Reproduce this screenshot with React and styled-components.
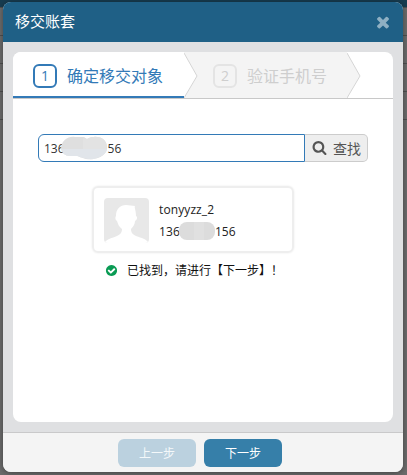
import { styled, createGlobalStyle } from "styled-components"

const GlobalStyle = createGlobalStyle`
    * {
        box-sizing: border-box;
    }

    body {
        margin: 0;
        overflow: hidden;
        font-family: "Open Sans", "Noto Sans CJK SC", sans-serif;
        font-size: 12px;
        color: #222;
    }
`

const Page = styled.div`
    height: 475px;
    padding: 2px 4px 3px 3px;
    background:
        linear-gradient(#173c50 0 7px, transparent 7px),
        repeating-linear-gradient(transparent 0 7px, #505050 7px 8px, transparent 8px 28px) 0 0 / 100% 120px no-repeat,
        #6c6c6c;
`

const Modal = styled.div`
    display: flex;
    flex-direction: column;
    height: 470px;
    border-radius: 8px;
    overflow: hidden;
    background: #dfe0e2;
    box-shadow: 0 1px 6px rgba(0, 0, 0, 0.4);
`

const Header = styled.div`
    display: flex;
    align-items: center;
    justify-content: space-between;
    height: 40px;
    padding: 0 11px 0 12px;
    background: #1f6086;
`

const Title = styled.div`
    padding-bottom: 2px;
    font-size: 15px;
    line-height: 20px;
    color: #fff;
`

const Icon = styled.svg`
    flex: none;
    width: ${props => props.$size}px;
    height: ${props => props.$size}px;
    fill: ${props => props.$color};
`

const Body = styled.div`
    flex: 1;
    padding: 10px;
`

const Panel = styled.div`
    height: 370px;
    border-radius: 8px;
    overflow: hidden;
    background: #fff;
`

const Steps = styled.div`
    display: flex;
    height: 47px;
    border-bottom: 1px solid #c8c8c8;
`

const Step = styled.div`
    display: flex;
    align-items: center;
    width: ${props => props.$width}px;
    height: 46px;
    padding: ${props => (props.$active ? 4 : 2)}px 0 0 ${props => props.$indent}px;
    font-size: 16px;
    color: ${props => (props.$active ? "#337ab7" : "#cecece")};
    background: ${props => (props.$active ? "#fff" : "#f4f4f4")};
    border-bottom: ${props => (props.$active ? "2px solid #337ab7" : "none")};
`

const StepLabel = styled.span`
    padding-bottom: 2px;
`

const StepNumber = styled.span`
    display: flex;
    align-items: center;
    justify-content: center;
    width: 24px;
    height: 24px;
    margin-right: 10px;
    border: 2px solid ${props => (props.$active ? "#337ab7" : "#e4e4e4")};
    border-radius: 6px;
    font-size: 14px;
    line-height: 20px;
`

const Arrow = styled.svg`
    flex: none;
    width: 14px;
    height: 46px;
    background: ${props => props.$after};
`

const Content = styled.div`
    padding: 35px 25px 0;
`

const Search = styled.div`
    display: flex;
    height: 28px;
`

const Field = styled.div`
    display: flex;
    align-items: center;
    width: 267px;
    padding-left: 5px;
    border: 1px solid #337ab7;
    border-radius: 6px 0 0 6px;
    color: #333;
`

const SearchButton = styled.button`
    display: flex;
    align-items: center;
    gap: 6px;
    width: 63px;
    padding: 0 0 1px 7px;
    border: 1px solid #ccc;
    border-left: none;
    border-radius: 0 5px 5px 0;
    background: #eee;
    font-family: inherit;
    font-size: 14px;
    color: #555;
`

const Smudge = styled.svg`
    position: relative;
    flex: none;
    width: ${props => props.$width}px;
    height: ${props => props.$height}px;
    margin-left: -${props => props.$overlap}px;
`

const Card = styled.div`
    display: flex;
    width: 202px;
    height: 67px;
    margin: 24px 0 0 54px;
    padding: 10px;
    border: 2px solid #eee;
    border-radius: 6px;
    box-shadow: 0 0 2px #e8e8e8;
`

const Avatar = styled.svg`
    width: 45px;
    height: 45px;
    border-radius: 4px;
    background: #e8e8e8;
`

const Info = styled.div`
    padding-left: 10px;
    letter-spacing: 0.1px;
`

const Line = styled.div`
    display: flex;
    align-items: center;
    height: 22px;
    color: #222;
`

const Status = styled.div`
    display: flex;
    align-items: center;
    gap: 9px;
    height: 18px;
    margin: 8px 0 0 67px;
    color: #111;
    white-space: nowrap;
`

const Footer = styled.div`
    display: flex;
    justify-content: center;
    gap: 8px;
    height: 40px;
    padding-top: 6px;
    padding-right: 6px;
    border-top: 1px solid #c9c9ca;
    background: #f4f4f4;
`

const Button = styled.button`
    width: 78px;
    height: 28px;
    padding: 0;
    border: none;
    border-radius: 6px;
    background: ${props => (props.disabled ? "#bbd1df" : "#367fa9")};
    font-family: inherit;
    font-size: 12px;
    color: ${props => (props.disabled ? "#f4f8fa" : "#fff")};
`

const CloseIcon = () => (
    <Icon viewBox="0 0 1792 1792" $size={18} $color="#8fb0c3">
        <path d="M1490 1322q0 40-28 68l-136 136q-28 28-68 28t-68-28l-294-294-294 294q-28 28-68 28t-68-28l-136-136q-28-28-28-68t28-68l294-294-294-294q-28-28-28-68t28-68l136-136q28-28 68-28t68 28l294 294 294-294q28-28 68-28t68 28l136 136q28 28 28 68t-28 68l-294 294 294 294q28 28 28 68z" />
    </Icon>
)

const SearchIcon = () => (
    <Icon viewBox="0 0 1792 1792" $size={15} $color="#555">
        <path d="M1216 832q0-185-131.5-316.5t-316.5-131.5-316.5 131.5-131.5 316.5 131.5 316.5 316.5 131.5 316.5-131.5 131.5-316.5zm512 832q0 52-38 90t-90 38q-54 0-90-38l-343-342q-179 124-399 124-143 0-273.5-55.5t-225-150-150-225-55.5-273.5 55.5-273.5 150-225 225-150 273.5-55.5 273.5 55.5 225 150 150 225 55.5 273.5q0 220-124 399l343 343q37 37 37 90z" />
    </Icon>
)

const CheckIcon = () => (
    <Icon viewBox="0 0 1792 1792" $size={13} $color="#0a9b54">
        <path d="M1412 734q0-28-18-46l-91-90q-19-19-45-19t-45 19l-408 407-226-226q-19-19-45-19t-45 19l-91 90q-18 18-18 46 0 27 18 45l362 362q19 19 45 19 27 0 46-19l543-543q18-18 18-45zm252 162q0 209-103 385.5t-279.5 279.5-385.5 103-385.5-103-279.5-279.5-103-385.5 103-385.5 279.5-279.5 385.5-103 385.5 103 279.5 279.5 103 385.5z" />
    </Icon>
)

const StepArrow = ({ before, after }) => (
    <Arrow viewBox="0 0 14 46" $after={after}>
        <path d="M0 0V46L13 24L0 1Z" fill={before} />
        <path d="M0 1L13 24L0 46" fill="none" stroke="#d5d5d5" />
    </Arrow>
)

const App = () => {
    return (
        <Page>
            <GlobalStyle />
            <Modal>
                <Header>
                    <Title>移交账套</Title>
                    <CloseIcon />
                </Header>
                <Body>
                    <Panel>
                        <Steps>
                            <Step $active $width={171} $indent={20}>
                                <StepNumber $active>1</StepNumber>
                                <StepLabel>确定移交对象</StepLabel>
                            </Step>
                            <StepArrow before="#fff" after="#f4f4f4" />
                            <Step $width={149} $indent={15}>
                                <StepNumber>2</StepNumber>
                                <StepLabel>验证手机号</StepLabel>
                            </Step>
                            <StepArrow before="#f4f4f4" after="#fff" />
                        </Steps>
                        <Content>
                            <Search>
                                <Field>
                                    136
                                    <Smudge viewBox="0 0 47 24" $width={47} $height={24} $overlap={4}>
                                        <path d="M0 12C1 4 7 0 14 1H23L26 3C31 0 38 0 42 3C46 6 47 12 45 16C41 22 33 24 25 23C20 22 18 20 15 20H9C4 20 1 17 0 12Z" fill="#dfdfdf" />
                                        <path d="M22 2L26 3C31 0 38 0 42 3C46 6 47 12 45 14H22Z" fill="#e3e3e3" />
                                        <path d="M0 13H46C45 19 36 24 27 23C20 22 18 20 15 20H9C4 20 1 17 0 13Z" fill="#e1e5ea" />
                                    </Smudge>
                                    56
                                </Field>
                                <SearchButton>
                                    <SearchIcon />
                                    查找
                                </SearchButton>
                            </Search>
                            <Card>
                                <Avatar viewBox="0 0 45 45">
                                    <path d="M0 45C3 41 8 40 13 38C17 36 18 34 18 31C15 29 14 26 13 23C11 22 11 19 12 18C12 11 16 7 22 7C25 7 28 8 31 8C30 9 32 12 32 18C34 19 33 22 31 23C31 26 29 29 27 31C27 34 28 36 32 38C38 40 42 41 45 45Z" fill="#fff" />
                                </Avatar>
                                <Info>
                                    <Line>tonyyzz_2</Line>
                                    <Line>
                                        136
                                        <Smudge viewBox="0 0 36 18" $width={36} $height={18} $overlap={1}>
                                            <rect width="36" height="18" rx="8" fill="#dcdcdc" />
                                            <rect x="15" width="10" height="18" fill="#e0e0e0" />
                                        </Smudge>
                                        156
                                    </Line>
                                </Info>
                            </Card>
                            <Status>
                                <CheckIcon />
                                已找到，请进行【下一步】！
                            </Status>
                        </Content>
                    </Panel>
                </Body>
                <Footer>
                    <Button disabled>上一步</Button>
                    <Button>下一步</Button>
                </Footer>
            </Modal>
        </Page>
    )
}

export default App
